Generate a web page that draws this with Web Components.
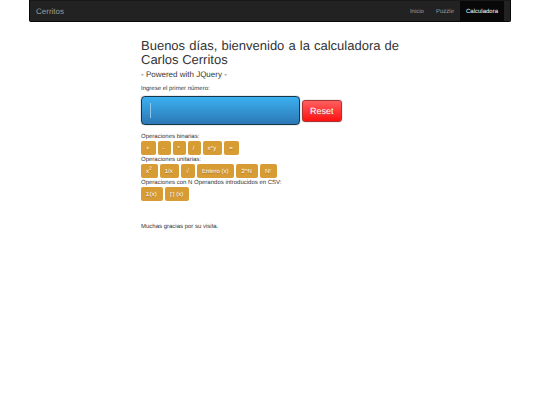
<!DOCTYPE html>
<html lang="es">
<head>
<meta charset="utf-8">
<meta name="viewport" content="width=device-width, initial-scale=1">
<title>Cerritos - Calculadora</title>
<style>
    body {
        margin: 0;
        background: #fff;
        color: #333;
        font: 6px/8px "Liberation Sans", Arial, sans-serif;
        text-rendering: geometricPrecision;
    }
    sup {
        font-size: 5px;
        line-height: 0;
    }
</style>
</head>
<body>
<site-nav brand="Cerritos">
    <nav-link href="#inicio">Inicio</nav-link>
    <nav-link href="#puzzle">Puzzle</nav-link>
    <nav-link href="#calculadora" active>Calculadora</nav-link>
</site-nav>
<calc-page>
    <span slot="title">Buenos días, bienvenido a la calculadora de Carlos Cerritos</span>
    <span slot="subtitle">- Powered with JQuery -</span>
    <calc-display label="Ingrese el primer número:"></calc-display>
    <calc-group label="Operaciones binarias:">
        <calc-key>+</calc-key>
        <calc-key>-</calc-key>
        <calc-key>*</calc-key>
        <calc-key>/</calc-key>
        <calc-key>x^y</calc-key>
        <calc-key>=</calc-key>
    </calc-group>
    <calc-group label="Operaciones unitarias:">
        <calc-key>x<sup>2</sup></calc-key>
        <calc-key>1/x</calc-key>
        <calc-key>√</calc-key>
        <calc-key>Entero (x)</calc-key>
        <calc-key>2^N</calc-key>
        <calc-key>N!</calc-key>
    </calc-group>
    <calc-group label="Operaciones con N Operandos introducidos en CSV:">
        <calc-key>Σ(x)</calc-key>
        <calc-key>∏ (x)</calc-key>
    </calc-group>
    <span slot="footer">Muchas gracias por su visita.</span>
</calc-page>

<script>
class SiteNav extends HTMLElement {
    connectedCallback() {
        this.attachShadow({mode: "open"});
        this.shadowRoot.innerHTML = `
            <style>
                :host {
                    display: block;
                    padding: 0 29px;
                }
                nav {
                    display: flex;
                    justify-content: space-between;
                    height: 22px;
                    box-sizing: border-box;
                    border: 1px solid #080808;
                    border-top-color: #181818;
                    border-radius: 0 0 2px 2px;
                    background: #222;
                    padding: 0 6px;
                }
                .brand {
                    color: #9d9d9d;
                    font-size: 8px;
                    line-height: 21px;
                    text-decoration: none;
                }
                .links { display: flex; }
            </style>
            <nav>
                <a class="brand" href="#">${this.getAttribute("brand")}</a>
                <div class="links"><slot></slot></div>
            </nav>
        `;
    }
}

class NavLink extends HTMLElement {
    connectedCallback() {
        this.attachShadow({mode: "open"});
        this.shadowRoot.innerHTML = `
            <style>
                :host { display: block; }
                a {
                    display: block;
                    padding: 2px 6px 0;
                    color: #9d9d9d;
                    line-height: 18px;
                    text-decoration: none;
                }
                :host([active]) a {
                    color: #fff;
                    background: #080808;
                }
            </style>
            <a href="${this.getAttribute("href")}"><slot></slot></a>
        `;
    }
}

class CalcPage extends HTMLElement {
    connectedCallback() {
        this.attachShadow({mode: "open"});
        this.shadowRoot.innerHTML = `
            <style>
                :host {
                    display: block;
                    max-width: 258px;
                    margin: 17px auto 0;
                }
                h1, h2 {
                    margin: 0;
                    font-weight: 500;
                    text-align: justify;
                }
                h1 {
                    font-size: 13px;
                    line-height: 14px;
                }
                h2 {
                    margin: 3px 0 6px;
                    font-size: 8px;
                    line-height: 9px;
                }
                footer { margin-top: 20px; }
            </style>
            <h1><slot name="title"></slot></h1>
            <h2><slot name="subtitle"></slot></h2>
            <slot></slot>
            <footer><slot name="footer"></slot></footer>
        `;
    }
}

class CalcDisplay extends HTMLElement {
    clear = () => {
        this.shadowRoot.querySelector("input").value = "";
    }

    connectedCallback() {
        this.attachShadow({mode: "open"});
        this.shadowRoot.innerHTML = `
            <style>
                :host {
                    display: block;
                    margin-bottom: 9px;
                }
                label { display: block; }
                .row {
                    display: flex;
                    align-items: center;
                    gap: 2px;
                    margin-top: 3px;
                }
                .field {
                    position: relative;
                    width: 159px;
                }
                input {
                    display: block;
                    box-sizing: border-box;
                    width: 100%;
                    height: 29px;
                    padding: 0 8px;
                    border: 1px solid #15364b;
                    border-radius: 4px;
                    outline: none;
                    background: linear-gradient(#3cb0f0, #2b78b5);
                    box-shadow: 0 0 1px #333;
                    color: #fff;
                    caret-color: transparent;
                    font: 13px "Liberation Sans", Arial, sans-serif;
                }
                /* text cursor of the empty field */
                .field:has(input:placeholder-shown)::after {
                    content: "";
                    position: absolute;
                    left: 9px;
                    top: 7px;
                    width: 1px;
                    height: 15px;
                    background: #8fc6ea;
                }
                button {
                    height: 22px;
                    box-sizing: border-box;
                    padding: 0 7px;
                    border: 1px solid #a33;
                    border-radius: 3px;
                    background: linear-gradient(#ff5f5f, #ff1111);
                    box-shadow: 0 0 1px #555;
                    color: #fff;
                    font: 9px "Liberation Sans", Arial, sans-serif;
                    text-rendering: inherit;
                    text-shadow: 0 1px 1px #b55;
                }
            </style>
            <label for="number">${this.getAttribute("label")}</label>
            <div class="row">
                <div class="field"><input id="number" type="text" placeholder=" "></div>
                <button type="button">Reset</button>
            </div>
        `;

        this.shadowRoot.querySelector("button").addEventListener("click", this.clear);
    }
}

class CalcGroup extends HTMLElement {
    connectedCallback() {
        this.attachShadow({mode: "open"});
        this.shadowRoot.innerHTML = `
            <style>
                :host { display: block; }
                .label { line-height: 7px; }
                .keys {
                    display: flex;
                    flex-wrap: wrap;
                    gap: 2px;
                    padding-bottom: 2px;
                }
            </style>
            <div class="label">${this.getAttribute("label")}</div>
            <div class="keys"><slot></slot></div>
        `;
    }
}

class CalcKey extends HTMLElement {
    connectedCallback() {
        this.attachShadow({mode: "open"});
        this.shadowRoot.innerHTML = `
            <style>
                :host { display: block; }
                button {
                    display: block;
                    box-sizing: border-box;
                    height: 14px;
                    padding: 2px 6px 0 5px;
                    border: 0;
                    border-radius: 2px;
                    background: #d89c35;
                    color: #fff;
                    font: 6px/12px "Liberation Sans", Arial, sans-serif;
                    text-rendering: inherit;
                    text-shadow: 0 1px 1px #a87423;
                }
            </style>
            <button type="button"><slot></slot></button>
        `;
    }
}

customElements.define("site-nav", SiteNav);
customElements.define("nav-link", NavLink);
customElements.define("calc-page", CalcPage);
customElements.define("calc-display", CalcDisplay);
customElements.define("calc-group", CalcGroup);
customElements.define("calc-key", CalcKey);
</script>
</body>
</html>
